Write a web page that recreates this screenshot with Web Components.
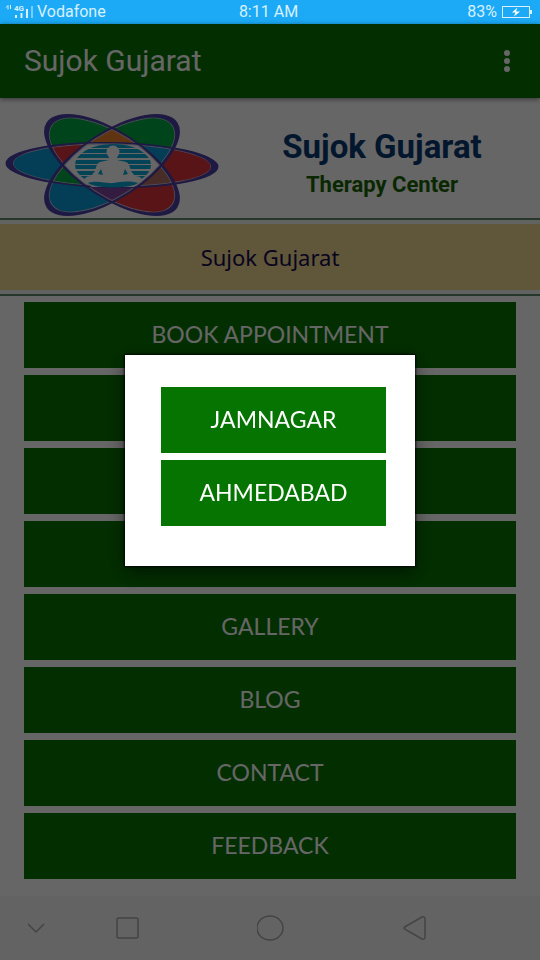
<!DOCTYPE html>
<html lang="en">
<head>
<meta charset="utf-8">
<meta name="viewport" content="width=device-width, initial-scale=1">
<title>Sujok Gujarat</title>
<style>
    :root {
        --sg-green: #067400;
        --sg-status: #1caaf6;
        --sg-sand: #f0d78e;
        --sg-rule: #5c8a6c;
        --sg-status-height: 24px;
        --sg-nav-height: 64px;
    }

    body {
        margin: 0;
        background-color: #ffffff;
        font-family: Roboto, "Liberation Sans", sans-serif;
    }
</style>
</head>
<body>

<sg-screen>
    <sg-status-bar slot="status" carrier="Vodafone" time="8:11 AM" battery="83%"></sg-status-bar>
    <sg-app-bar slot="bar">Sujok Gujarat</sg-app-bar>
    <sg-header>
        <span slot="name">Sujok Gujarat</span>
        <span slot="tagline">Therapy Center</span>
    </sg-header>
    <sg-banner>Sujok Gujarat</sg-banner>
    <sg-button-list>
        <sg-button>BOOK APPOINTMENT</sg-button>
        <sg-button></sg-button>
        <sg-button></sg-button>
        <sg-button></sg-button>
        <sg-button>GALLERY</sg-button>
        <sg-button>BLOG</sg-button>
        <sg-button>CONTACT</sg-button>
        <sg-button>FEEDBACK</sg-button>
    </sg-button-list>
    <sg-nav-bar slot="nav"></sg-nav-bar>
    <sg-dialog slot="dialog">
        <sg-button>JAMNAGAR</sg-button>
        <sg-button>AHMEDABAD</sg-button>
    </sg-dialog>
</sg-screen>

<template id="sg-screen-template">
    <style>
        :host {
            display: flex;
            flex-direction: column;
            min-height: 100vh;
        }

        main {
            flex: 1;
        }
    </style>
    <slot name="status"></slot>
    <slot name="bar"></slot>
    <main><slot></slot></main>
    <slot name="nav"></slot>
    <slot name="dialog"></slot>
</template>

<template id="sg-status-bar-template">
    <style>
        :host {
            display: grid;
            grid-template-columns: 1fr auto 1fr;
            align-items: center;
            height: var(--sg-status-height);
            padding: 0 8px 0 5px;
            background-color: var(--sg-status);
            color: #d8f0ff;
            font-size: 16px;
            line-height: 24px;
        }

        .left,
        .right {
            display: flex;
            align-items: center;
        }

        .left {
            gap: 1px;
        }

        .right {
            justify-content: flex-end;
            gap: 5px;
        }

        svg {
            display: block;
        }
    </style>
    <div class="left">
        <svg width="31" height="24" viewBox="0 0 31 24" fill="#d8f0ff" aria-hidden="true">
            <path d="M1 7.500l2-2v4M5.500 5v4" fill="none" stroke="#d8f0ff"/>
            <text x="9" y="11" font-size="8" font-weight="700" font-family="Roboto, sans-serif">4G</text>
            <path d="M10 15h2v3h-2zM15.500 13h2v5h-2zM21 9h2v9h-2zM26.500 6h1v12h-1z"/>
        </svg>
        <span id="carrier"></span>
    </div>
    <span id="time"></span>
    <div class="right">
        <span id="battery"></span>
        <svg width="30" height="12" viewBox="0 0 30 12" aria-hidden="true">
            <rect x=".5" y=".5" width="27" height="11" fill="none" stroke="#d8f0ff"/>
            <path d="M28 4h2v4h-2z" fill="#d8f0ff"/>
            <path d="M15.500 1.500l-5.500 5h3.500l-1.500 4 6-5h-4z" fill="#ffffff"/>
        </svg>
    </div>
</template>

<template id="sg-app-bar-template">
    <style>
        :host {
            display: flex;
            align-items: center;
            justify-content: space-between;
            height: 74px;
            padding: 0 17px 0 24px;
            background-color: var(--sg-green);
            box-shadow: 0 1px 5px rgba(0, 0, 0, 0.5);
            color: #ffffff;
            position: relative;
        }

        h1 {
            margin: 0;
            font-size: 30px;
            font-weight: 400;
            line-height: 36px;
        }

        button {
            padding: 8px;
            border: none;
            background: none;
        }

        svg {
            display: block;
        }
    </style>
    <h1><slot></slot></h1>
    <button type="button" aria-label="More options">
        <svg width="16" height="24" viewBox="0 0 16 24" fill="#ffffff">
            <circle cx="8" cy="4" r="3"/>
            <circle cx="8" cy="12" r="3"/>
            <circle cx="8" cy="20" r="3"/>
        </svg>
    </button>
</template>

<template id="sg-logo-template">
    <style>
        :host {
            display: block;
        }

        svg {
            display: block;
            width: 100%;
        }
    </style>
    <svg viewBox="0 0 216 104" role="img" aria-label="Sujok Gujarat logo">
        <defs>
            <clipPath id="h"><ellipse cx="108" cy="51" rx="99" ry="22" transform="rotate(1 108 51)"/></clipPath>
            <clipPath id="a"><ellipse cx="108" cy="51" rx="73" ry="32" transform="rotate(33 108 51)"/></clipPath>
            <clipPath id="b"><ellipse cx="108" cy="51" rx="73" ry="32" transform="rotate(-33 108 51)"/></clipPath>
            <clipPath id="globe"><ellipse cx="109" cy="51" rx="38" ry="21"/></clipPath>
        </defs>

        <!-- outer petals -->
        <g clip-path="url(#h)">
            <path fill="#0a9bd8" d="M0 0h108v104H0z"/>
            <path fill="#dc3238" d="M108 0h108v104H108z"/>
        </g>
        <g clip-path="url(#a)">
            <path fill="#00aa48" d="M0 0h108v104H0z"/>
            <path fill="#dc3238" d="M108 0h108v104H108z"/>
        </g>
        <g clip-path="url(#b)">
            <path fill="#0a9bd8" d="M0 0h108v104H0z"/>
            <path fill="#00aa48" d="M108 0h108v104H108z"/>
        </g>

        <!-- where two petals cross -->
        <g clip-path="url(#a)"><g clip-path="url(#b)">
            <path fill="#f08228" d="M0 0h216v51H0z"/>
            <path fill="#8246a0" d="M0 51h216v53H0z"/>
        </g></g>
        <g clip-path="url(#h)"><g clip-path="url(#a)">
            <path fill="#dc3238" d="M0 0h108v104H0z"/>
            <path fill="#b46e64" d="M108 0h108v104H108z"/>
        </g></g>
        <g clip-path="url(#h)"><g clip-path="url(#b)">
            <path fill="#00aa48" d="M0 0h108v104H0z"/>
            <path fill="#0a9bd8" d="M108 0h108v104H108z"/>
        </g></g>
        <g clip-path="url(#h)"><g clip-path="url(#a)"><g clip-path="url(#b)">
            <path fill="#ffffff" d="M0 0h216v104H0z"/>
        </g></g></g>

        <!-- light inner edges, then the rings, thicker at the tips -->
        <g fill="none" stroke="#c4bcdc">
            <ellipse cx="108" cy="51" rx="99" ry="21" transform="rotate(1 108 51)"/>
            <ellipse cx="108" cy="51" rx="72" ry="31" transform="rotate(33 108 51)"/>
            <ellipse cx="108" cy="51" rx="72" ry="31" transform="rotate(-33 108 51)"/>
        </g>
        <g fill="#4b3fa5" fill-rule="evenodd">
            <path transform="rotate(1 108 51)" d="M1.500 51a106.500 23 0 1 0 213 0a106.500 23 0 1 0-213 0zM9 51a99 21.500 0 1 0 198 0a99 21.500 0 1 0-198 0z"/>
            <path transform="rotate(33 108 51)" d="M30 51a78 33.500 0 1 0 156 0a78 33.500 0 1 0-156 0zM35.500 51a72.500 31.500 0 1 0 145 0a72.500 31.500 0 1 0-145 0z"/>
            <path transform="rotate(-33 108 51)" d="M30 51a78 33.500 0 1 0 156 0a78 33.500 0 1 0-156 0zM35.500 51a72.500 31.500 0 1 0 145 0a72.500 31.500 0 1 0-145 0z"/>
        </g>

        <!-- striped globe with the seated figure -->
        <g clip-path="url(#globe)" fill="#0aa5d4">
            <path d="M70 30h78v4H70zM70 35h78v4H70zM70 40h78v4H70zM70 46h78v4H70zM70 51h78v4H70zM70 57h78v4H70zM70 62h78v3H70z"/>
        </g>
        <g fill="#ffffff">
            <circle cx="109" cy="38" r="6.500"/>
            <path d="M105 42h8v4l9 2c3 1 4 5 5 9l4 5c6 0 8 3 5 6l-13 2H94l-12-2c-3-3 0-6 5-6l4-5c1-4 2-8 5-9l9-2z"/>
            <path d="M80 66h58l-8 7H88z"/>
        </g>
        <g fill="#0aa5d4">
            <path d="M97 55l2 6-5-1zM121 55l-2 6 5-1z"/>
            <path d="M84 69c10-3 18 1 25 0s15-3 25 0c-8 6-42 6-50 0z"/>
        </g>
    </svg>
</template>

<template id="sg-header-template">
    <style>
        :host {
            display: grid;
            grid-template-columns: 216px 1fr;
            align-items: center;
            gap: 4px;
            height: 120px;
            padding: 0 0 0 4px;
            border-bottom: 2px solid var(--sg-rule);
        }

        sg-logo {
            margin-top: 16px;
        }

        .titles {
            padding-top: 10px;
            text-align: center;
        }

        h2,
        p {
            margin: 0;
            font-weight: 700;
        }

        h2 {
            color: #073a70;
            font-size: 33px;
            line-height: 44px;
        }

        p {
            color: #1a6400;
            font-size: 22px;
            line-height: 32px;
        }
    </style>
    <sg-logo></sg-logo>
    <div class="titles">
        <h2><slot name="name"></slot></h2>
        <p><slot name="tagline"></slot></p>
    </div>
</template>

<template id="sg-banner-template">
    <style>
        :host {
            display: block;
            padding: 4px 0;
            border-bottom: 2px solid var(--sg-rule);
            background-color: #f2f8f2;
        }

        p {
            margin: 0;
            background-color: var(--sg-sand);
            color: #140a50;
            font-family: "Noto Sans", sans-serif;
            font-size: 22px;
            line-height: 66px;
            text-align: center;
        }
    </style>
    <p><slot></slot></p>
</template>

<template id="sg-button-list-template">
    <style>
        :host {
            display: flex;
            flex-direction: column;
            gap: 7px;
            padding: 6px 24px 16px;
        }
    </style>
    <slot></slot>
</template>

<template id="sg-button-template">
    <style>
        :host {
            display: block;
        }

        button {
            display: block;
            width: 100%;
            height: 66px;
            padding: 0 0 2px;
            border: none;
            background-color: var(--sg-green);
            color: #ffffff;
            font-family: Lato, sans-serif;
            font-size: 23px;
            line-height: 28px;
            text-align: center;
        }
    </style>
    <button type="button"><slot></slot></button>
</template>

<template id="sg-nav-bar-template">
    <style>
        :host {
            display: grid;
            grid-template-columns: 72px 1fr 174px 1fr 70px;
            align-items: center;
            justify-items: center;
            height: var(--sg-nav-height);
            background-color: #f8f8f8;
        }

        button {
            padding: 0;
            border: none;
            background: none;
        }

        svg {
            display: block;
            fill: none;
            stroke: #a8a8a8;
            stroke-width: 1.5;
        }
    </style>
    <button type="button" aria-label="Hide">
        <svg width="28" height="28" viewBox="0 0 28 28"><path d="M6 10l8 8 8-8"/></svg>
    </button>
    <button type="button" aria-label="Recent apps">
        <svg width="28" height="28" viewBox="0 0 28 28"><rect x="3" y="4" width="21" height="20" rx="1.500"/></svg>
    </button>
    <button type="button" aria-label="Home">
        <svg width="28" height="28" viewBox="0 0 28 28"><ellipse cx="13" cy="14" rx="13" ry="12"/></svg>
    </button>
    <button type="button" aria-label="Back">
        <svg width="28" height="28" viewBox="0 0 28 28"><path d="M4.500 13L22 3q3-1 3 2v18q0 3-3 2L4.500 15q-1-1 0-2z"/></svg>
    </button>
</template>

<template id="sg-dialog-template">
    <style>
        /* the scrim leaves the status bar uncovered */
        :host {
            display: grid;
            place-items: center;
            position: fixed;
            inset: var(--sg-status-height) 0 0;
            padding-bottom: var(--sg-nav-height);
            background-color: rgba(0, 0, 0, 0.6);
        }

        .panel {
            display: flex;
            flex-direction: column;
            gap: 7px;
            box-sizing: border-box;
            width: 290px;
            padding: 32px 29px 40px 36px;
            background-color: #ffffff;
            box-shadow: 0 0 2px 1px rgba(0, 0, 0, 0.8), 0 6px 18px rgba(0, 0, 0, 0.5);
        }
    </style>
    <div class="panel" role="dialog" aria-modal="true" aria-label="Choose a city">
        <slot></slot>
    </div>
</template>

<script>
    (() => {

        class SgElement extends HTMLElement {
            constructor() {
                super();

                const template = document.getElementById(`${this.localName}-template`)
                this._shadowRoot = this.attachShadow({ mode: "open" });
                this._shadowRoot.appendChild(template.content.cloneNode(true));
            }
        }

        class SgStatusBar extends SgElement {
            connectedCallback() {
                for (const name of ['carrier', 'time', 'battery']) {
                    this._shadowRoot.getElementById(name).textContent = this.getAttribute(name)
                }
            }
        }

        customElements.define("sg-status-bar", SgStatusBar);
        customElements.define("sg-screen", class extends SgElement {});
        customElements.define("sg-app-bar", class extends SgElement {});
        customElements.define("sg-logo", class extends SgElement {});
        customElements.define("sg-header", class extends SgElement {});
        customElements.define("sg-banner", class extends SgElement {});
        customElements.define("sg-button-list", class extends SgElement {});
        customElements.define("sg-button", class extends SgElement {});
        customElements.define("sg-nav-bar", class extends SgElement {});
        customElements.define("sg-dialog", class extends SgElement {});
    })();
</script>
</body>
</html>
